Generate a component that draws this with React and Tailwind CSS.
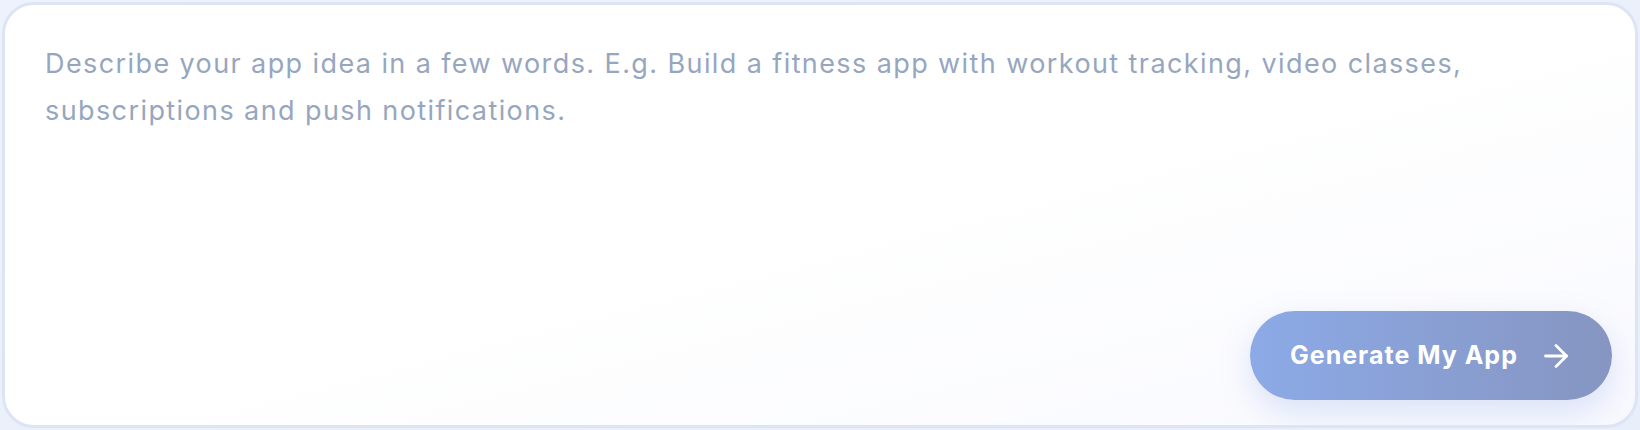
import { useState } from "react";

function ArrowIcon() {
  return (
    <svg
      width="24"
      height="24"
      viewBox="0 0 24 24"
      fill="none"
      stroke="currentColor"
      strokeWidth="2.8"
      strokeLinecap="round"
      strokeLinejoin="round"
      className="shrink-0"
    >
      <path d="M1.5 12h21" />
      <path d="M12 1.5 22.5 12 12 22.5" />
    </svg>
  );
}

export default function App() {
  const [idea, setIdea] = useState("");

  return (
    <div className="h-[430px] w-[1640px] bg-gradient-to-br from-[#eef2fc] to-[#e8eefa] p-[2px] font-['Inter',sans-serif]">
      <div className="flex h-full flex-col overflow-hidden rounded-[32px] border-[3px] border-[#dce4f6] bg-gradient-to-br from-white via-white to-[#f8f9fe]">
        <textarea
          value={idea}
          onChange={(event) => setIdea(event.target.value)}
          placeholder="Describe your app idea in a few words. E.g. Build a fitness app with workout tracking, video classes, subscriptions and push notifications."
          className="flex-1 resize-none bg-transparent pl-[40px] pr-[60px] pt-[35px] text-[27px] leading-[47px] tracking-[0.052em] text-slate-700 placeholder:text-[#97a6bf] focus:outline-none"
        />
        <div className="flex justify-end pb-[25px] pr-[23px]">
          <button
            type="button"
            className="flex h-[89px] w-[362px] items-center justify-between rounded-full bg-gradient-to-r from-[#8caae7] to-[#8695c1] pl-[40px] pr-[44px] text-[25px] font-bold tracking-[0.04em] text-white shadow-[0_12px_32px_rgba(110,140,225,0.22)]"
          >
            <span>Generate My App</span>
            <ArrowIcon />
          </button>
        </div>
      </div>
    </div>
  );
}
